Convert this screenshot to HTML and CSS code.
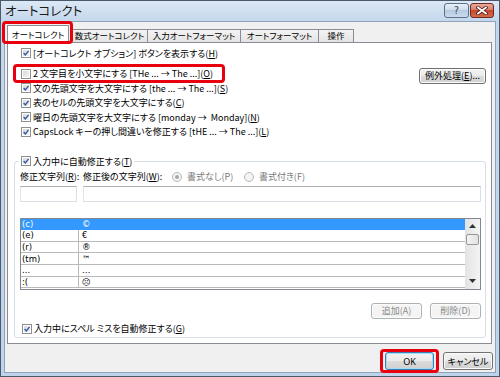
FILE: index.html
```html
<!DOCTYPE html>
<html lang="ja">
<head>
  <meta charset="UTF-8" />
  <title>オートコレクト</title>
  <link rel="stylesheet" href="styles.css">
</head>
<body>

  <div class="window">
    <div class="titlebar">
      <span class="title">オートコレクト</span>
      <div class="caps">
        <span class="cap help">?</span>
        <span class="cap close">
          <svg width="12" height="9" viewBox="0 0 12 9"><path d="M2 1.5 L10 7.5 M10 1.5 L2 7.5" stroke="#4a1a10" stroke-width="3.4" stroke-linecap="square"/><path d="M2 1.5 L10 7.5 M10 1.5 L2 7.5" stroke="#fff" stroke-width="1.8" stroke-linecap="square"/></svg>
        </span>
      </div>
    </div>

    <div class="client">
      <div class="tabs">
        <div class="tab active">オートコレクト<span class="mark mark-tab"></span></div>
        <div class="tab t2">数式オートコレクト</div>
        <div class="tab t3">入力オートフォーマット</div>
        <div class="tab t4">オートフォーマット</div>
        <div class="tab t5">操作</div>
      </div>

      <div class="panel">
        <div class="opts">
          <div class="row"><span class="cb on"><svg viewBox="0 0 10 10"><path d="M2 5 L4.2 7.4 L8.2 2.4" /></svg></span>[オートコレクト オプション] ボタンを表示する(<u>H</u>)</div>
          <div class="row row-ex">
            <span class="hl"><span class="cb"></span>2 文字目を小文字にする [THe ... → The ...](<u>O</u>)<span class="mark mark-row"></span></span>
            <span class="btn btn-ex">例外処理(<u>E</u>)...</span>
          </div>
          <div class="row"><span class="cb on"><svg viewBox="0 0 10 10"><path d="M2 5 L4.2 7.4 L8.2 2.4" /></svg></span>文の先頭文字を大文字にする [the ... → The ...](<u>S</u>)</div>
          <div class="row"><span class="cb on"><svg viewBox="0 0 10 10"><path d="M2 5 L4.2 7.4 L8.2 2.4" /></svg></span>表のセルの先頭文字を大文字にする(<u>C</u>)</div>
          <div class="row"><span class="cb on"><svg viewBox="0 0 10 10"><path d="M2 5 L4.2 7.4 L8.2 2.4" /></svg></span>曜日の先頭文字を大文字にする [monday → &nbsp;Monday](<u>N</u>)</div>
          <div class="row"><span class="cb on"><svg viewBox="0 0 10 10"><path d="M2 5 L4.2 7.4 L8.2 2.4" /></svg></span>CapsLock キーの押し間違いを修正する [tHE ... → The ...](<u>L</u>)</div>
        </div>

        <fieldset class="group">
          <legend><span class="cb on"><svg viewBox="0 0 10 10"><path d="M2 5 L4.2 7.4 L8.2 2.4" /></svg></span>入力中に自動修正する(<u>T</u>)</legend>

          <div class="labels">
            <span class="lab1">修正文字列(<u>R</u>):</span>
            <span class="lab2">修正後の文字列(<u>W</u>):</span>
            <span class="radio r1"><span class="rb on"></span>書式なし(P)</span>
            <span class="radio r2"><span class="rb"></span>書式付き(F)</span>
          </div>

          <div class="inputs">
            <span class="field f1"></span>
            <span class="field f2"></span>
          </div>

          <div class="list">
            <div class="list-rows">
              <div class="lrow sel"><span class="c1">(c)</span><span class="c2">©</span></div>
              <div class="lrow"><span class="c1">(e)</span><span class="c2">€</span></div>
              <div class="lrow"><span class="c1">(r)</span><span class="c2">®</span></div>
              <div class="lrow"><span class="c1">(tm)</span><span class="c2">™</span></div>
              <div class="lrow"><span class="c1">...</span><span class="c2">…</span></div>
              <div class="lrow"><span class="c1">:(</span><span class="c2">☹</span></div>
            </div>
            <div class="sbar">
              <span class="arrow"><svg width="7" height="4" viewBox="0 0 7 4"><path d="M0 4 L3.5 0 L7 4 Z" fill="#333"/></svg></span>
              <span class="thumb"></span>
              <span class="track"></span>
              <span class="arrow"><svg width="7" height="4" viewBox="0 0 7 4"><path d="M0 0 L7 0 L3.5 4 Z" fill="#333"/></svg></span>
            </div>
          </div>

          <div class="list-btns">
            <span class="btn off">追加(A)</span>
            <span class="btn off">削除(D)</span>
          </div>

          <div class="row last"><span class="cb on"><svg viewBox="0 0 10 10"><path d="M2 5 L4.2 7.4 L8.2 2.4" /></svg></span>入力中にスペル ミスを自動修正する(<u>G</u>)</div>
        </fieldset>
      </div>

      <div class="footer">
        <span class="btn btn-ok">OK<span class="mark mark-ok"></span></span>
        <span class="btn btn-cancel">キャンセル</span>
      </div>
    </div>
  </div>

</body>
</html>
```

FILE: styles.css
```css
* {
  box-sizing: border-box;
}

body {
  margin: 0;
  font-family: "Noto Sans CJK JP", "Noto Sans", sans-serif;
  font-feature-settings: "palt";
  font-size: 9px;
  color: #000;
}

u {
  text-decoration: underline;
  text-underline-offset: 1px;
}

.window {
  width: 500px;
  height: 377px;
  border: 1px solid #4b5a6b;
  padding: 0 3px 3px;
  background: linear-gradient(#dce8f5, #c4d7ec 20px, #bfd3ea);
  display: flex;
  flex-direction: column;
}

/* title bar */
.titlebar {
  height: 20px;
  display: flex;
  align-items: flex-start;
  padding-left: 1px;
}

.title {
  font-size: 12.5px;
  line-height: 20px;
  color: #1b1b1b;
}

.caps {
  margin-left: auto;
  margin-right: 2px;
  margin-top: 2px;
  display: flex;
  gap: 1px;
}

.cap {
  height: 15px;
  border: 1px solid #5f7187;
  border-radius: 3px;
  display: flex;
  align-items: center;
  justify-content: center;
}

.help {
  width: 25px;
  background: linear-gradient(#e8f0f8, #cbdaea 50%, #b7cbe0 50%, #c9dbee);
  font-family: "DejaVu Sans", sans-serif;
  font-size: 10px;
  color: #3a4a5c;
}

.close {
  width: 24px;
  border-color: #6e2a1e;
  background: linear-gradient(#e9a99b, #d97a66 50%, #c7462d 50%, #d66a4c);
}

/* client area */
.client {
  flex: 1;
  border: 1px solid #8ea3ba;
  background: #f0f0f0;
}

.tabs {
  height: 20px;
  display: flex;
  align-items: flex-end;
  padding-left: 2px;
  font-size: 8.5px;
}

.tab {
  height: 13px;
  line-height: 10px;
  border: 1px solid #898c95;
  border-bottom: 0;
  background: linear-gradient(#f3f3f3, #e4e4e4);
  text-align: center;
  white-space: nowrap;
}

.tab.active {
  position: relative;
  z-index: 2;
  width: 62px;
  height: 18px;
  margin-bottom: -1px;
  padding-top: 3px;
  background: #fff;
}

.t2 { width: 77px; margin-left: 2px; }
.t3 { width: 93px; border-left: 0; }
.t4 { width: 78px; border-left: 0; }
.t5 { width: 35px; border-left: 0; }

.panel {
  height: 302px;
  margin: 0 3px 0 2px;
  border: 1px solid #898c95;
  background: #fff;
  padding: 3px 5px 0 6px;
}

.row {
  height: 14.5px;
  display: flex;
  align-items: center;
  white-space: nowrap;
}

.opts .row {
  padding-left: 7px;
}

.row-ex {
  margin-top: 6px;
  justify-content: space-between;
}

.hl {
  position: relative;
  display: flex;
  align-items: center;
}

/* checkbox */
.cb {
  width: 10px;
  height: 10px;
  margin-right: 2px;
  flex: none;
  border: 1px solid #8e8f8f;
  background: linear-gradient(135deg, #d6d6d6, #f7f7f7);
  box-shadow: inset 0 0 0 1px #fff;
}

.cb svg {
  display: block;
  width: 8px;
  height: 8px;
}

.cb path {
  fill: none;
  stroke: #2f56a0;
  stroke-width: 1.7;
}

/* buttons */
.btn {
  display: flex;
  align-items: center;
  justify-content: center;
  height: 16px;
  border: 1px solid #707070;
  border-radius: 3px;
  background: linear-gradient(#f2f2f2, #ebebeb 50%, #dddddd 50%, #cfcfcf);
  box-shadow: inset 0 0 0 1px #fcfcfc;
  white-space: nowrap;
}

.btn-ex {
  width: 67px;
  margin-top: 4px;
}

.btn.off {
  width: 51px;
  color: #8a8a8a;
  border-color: #adb2b5;
  background: #f4f4f4;
}

/* group */
.group {
  margin: 15px 0 0 0;
  padding: 0 4px 1px 5px;
  border: 1px solid #d5dfe5;
  border-radius: 3px;
}

.group legend {
  display: flex;
  align-items: center;
  height: 14.5px;
  padding: 0 2px 0 2px;
  margin-left: -1px;
}

.labels {
  margin-top: 1px;
  height: 14.5px;
  display: flex;
  align-items: center;
  white-space: nowrap;
}

.lab1 { width: 63px; }
.lab2 { width: 89px; }

.radio {
  display: flex;
  align-items: center;
  color: #7a7a7a;
}

.r1 { width: 72px; }

.rb {
  width: 10px;
  height: 10px;
  margin-right: 5px;
  border: 1px solid #b8b8b8;
  border-radius: 50%;
  background: #f4f4f4;
  display: flex;
  align-items: center;
  justify-content: center;
}

.rb.on::after {
  content: "";
  width: 4px;
  height: 4px;
  border-radius: 50%;
  background: #a8a8a8;
}

.inputs {
  margin-top: 2px;
  display: flex;
  gap: 6px;
}

.field {
  height: 16px;
  border: 1px solid #dbdfe6;
  border-top-color: #abadb3;
  border-left-color: #e2e3ea;
  background: #fff;
}

.f1 { width: 57px; }
.f2 { flex: 1; }

/* list */
.list {
  margin-top: 15.5px;
  height: 72px;
  display: flex;
  border: 1px solid #828790;
  background: #fff;
}

.list-rows {
  flex: 1;
}

.lrow {
  height: calc(70px / 6);
  display: flex;
  align-items: center;
  border-bottom: 1px solid #b9b9b9;
  font-family: "DejaVu Sans", sans-serif;
  font-size: 8.5px;
}

.lrow.sel {
  background: #3399ff;
  color: #fff;
  border-bottom-color: #3399ff;
}

.c1 {
  width: 58px;
  height: 100%;
  padding-left: 1px;
  border-right: 1px solid #b9b9b9;
  display: flex;
  align-items: center;
}

.sel .c1 {
  border-right-color: #3399ff;
}

.c2 {
  padding-left: 3px;
}

.sbar {
  width: 15px;
  display: flex;
  flex-direction: column;
  background: linear-gradient(90deg, #e3e3e3, #f4f4f4);
}

.arrow {
  height: 15px;
  display: flex;
  align-items: center;
  justify-content: center;
}

.thumb {
  height: 11px;
  margin: 0 1px;
  border: 1px solid #979797;
  border-radius: 2px;
  background: linear-gradient(90deg, #f3f3f3, #e2e2e2);
}

.track {
  flex: 1;
}

.list-btns {
  margin-top: 13px;
  display: flex;
  justify-content: flex-end;
  gap: 8px;
}

.row.last {
  margin-top: 3px;
  padding-left: 2px;
}

/* footer */
.footer {
  margin-top: 8px;
  padding-right: 2px;
  display: flex;
  justify-content: flex-end;
  gap: 9px;
}

.btn-ok,
.btn-cancel {
  height: 18px;
  font-size: 9px;
}

.btn-ok {
  position: relative;
  width: 49px;
  border-color: #3c7fb1;
  box-shadow: inset 0 0 0 1px #9fdcf5;
  font-family: "Noto Sans", sans-serif;
}

.btn-cancel {
  width: 50px;
}

/* red highlight boxes */
.mark {
  position: absolute;
  z-index: 3;
  border: 3px solid #e8000e;
  border-radius: 4px;
}

.mark-tab {
  top: -5px;
  left: -6px;
  right: -5px;
  bottom: -1px;
}

.mark-row {
  top: -3.5px;
  bottom: -3px;
  left: -8px;
  right: -12px;
}

.mark-ok {
  top: -4px;
  bottom: -4px;
  left: -6px;
  right: -6px;
}
```
